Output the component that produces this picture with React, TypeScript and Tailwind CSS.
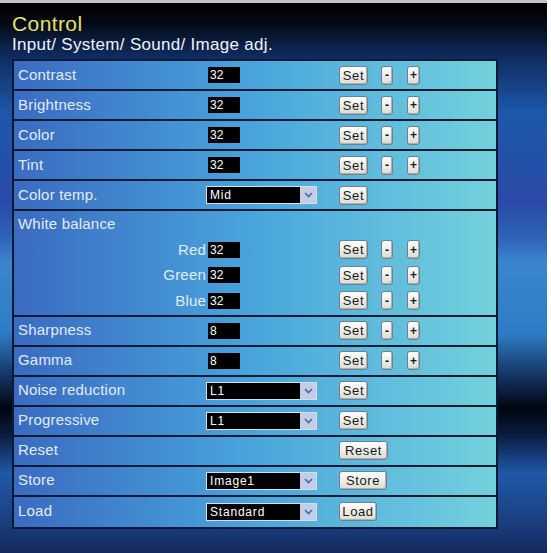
import React from "react";

type Row =
  | { label: string; kind: "num"; value: string }
  | { label: string; kind: "select"; value: string; action: string }
  | { label: string; kind: "button"; action: string }
  | { label: string; kind: "balance" };

const rows: Row[] = [
  { label: "Contrast", kind: "num", value: "32" },
  { label: "Brightness", kind: "num", value: "32" },
  { label: "Color", kind: "num", value: "32" },
  { label: "Tint", kind: "num", value: "32" },
  { label: "Color temp.", kind: "select", value: "Mid", action: "Set" },
  { label: "White balance", kind: "balance" },
  { label: "Sharpness", kind: "num", value: "8" },
  { label: "Gamma", kind: "num", value: "8" },
  { label: "Noise reduction", kind: "select", value: "L1", action: "Set" },
  { label: "Progressive", kind: "select", value: "L1", action: "Set" },
  { label: "Reset", kind: "button", action: "Reset" },
  { label: "Store", kind: "select", value: "Image1", action: "Store" },
  { label: "Load", kind: "select", value: "Standard", action: "Load" },
];

const font = { fontFamily: '"Liberation Sans", Arial, sans-serif' };

function Btn({ children, w, bold }: { children: React.ReactNode; w: string; bold?: boolean }) {
  return (
    <button
      className={`${w} ${bold ? "font-bold text-[12px]" : "text-[13px] tracking-[0.6px]"} flex h-[19px] items-center justify-center rounded-[3px] border border-[#6f7f8f] bg-gradient-to-b from-[#ffffff] to-[#dcdcd6] leading-none text-[#1a1a1a] shadow-[inset_-1px_-1px_0_#b0b0a8]`}
    >
      {children}
    </button>
  );
}

function NumBox({ value }: { value: string }) {
  return (
    <div className="flex h-[16px] w-[32px] items-center bg-black pl-[2px] text-[12px] leading-none text-white">
      {value}
    </div>
  );
}

function SelectBox({ value }: { value: string }) {
  return (
    <div className="flex h-[18px] w-[111px] border border-[#d8dde6] bg-black">
      <div className="flex flex-1 items-center pl-[3px] text-[12px] leading-none tracking-[0.8px] text-white">{value}</div>
      <div className="flex w-[16px] items-center justify-center bg-[#c3cde6]">
        <svg width="9" height="6" viewBox="0 0 9 6">
          <path d="M1 1l3.5 3.5L8 1" fill="none" stroke="#4a68a6" strokeWidth="1.6" />
        </svg>
      </div>
    </div>
  );
}

function Adjust() {
  return (
    <div className="flex items-center">
      <Btn w="w-[29px]">Set</Btn>
      <div className="ml-[13px]">
        <Btn w="w-[12px]" bold>
          -
        </Btn>
      </div>
      <div className="ml-[14px]">
        <Btn w="w-[13px]" bold>
          +
        </Btn>
      </div>
    </div>
  );
}

function TableRow({ row, last }: { row: Row; last: boolean }) {
  const border = last ? "" : "border-b-2 border-[#0b1a33]";
  const bg = "bg-gradient-to-r from-[#3a6bc1] via-[#4aa5dc] to-[#73d1dc]";
  const labelCls = "text-[15px] tracking-[0.2px] text-[#e3ebf8]";

  if (row.kind === "balance") {
    return (
      <div className={`${border} ${bg} pb-[1px]`}>
        <div className={`flex h-[26px] items-center pl-[4px] ${labelCls}`}>{row.label}</div>
        {["Red", "Green", "Blue"].map((c) => (
          <div key={c} className="flex h-[25.5px] items-center">
            <div className={`w-[194px] pr-[2px] text-right ${labelCls}`}>{c}</div>
            <div className="w-[131px]">
              <NumBox value="32" />
            </div>
            <Adjust />
          </div>
        ))}
      </div>
    );
  }

  return (
    <div className={`flex h-[30px] items-center ${border} ${bg}`}>
      <div className={`w-[194px] pl-[4px] ${labelCls}`}>{row.label}</div>
      <div className="w-[131px]">
        {row.kind === "num" && <NumBox value={row.value} />}
        {row.kind === "select" && (
          <div className="-ml-[2px]">
            <SelectBox value={row.value} />
          </div>
        )}
      </div>
      {row.kind === "num" && <Adjust />}
      {row.kind === "select" && (
        <Btn w={row.action === "Set" ? "w-[29px]" : row.action === "Store" ? "w-[48px]" : "w-[38px]"}>{row.action}</Btn>
      )}
      {row.kind === "button" && <Btn w="w-[49px]">{row.action}</Btn>}
    </div>
  );
}

export default function App() {
  return (
    <div className="h-[553px] w-[551px] bg-white" style={font}>
      <div className="h-[3px] w-[547px] bg-[#c4c4c4]" />
      <div className="h-[550px] w-[547px] bg-[linear-gradient(to_bottom,#000000_0px,#040914_20px,#0f2d62_55px,#1d58aa_110px,#2a4aa8_200px,#2f63b8_235px,#3a86cc_260px,#2f7cc6_330px,#13305e_375px,#000610_405px,#0a1a3c_430px,#1f58a8_470px,#1b4488_510px,#15275a_553px)] px-[12px] pt-[10px]">
        <div className="text-[21px] leading-[22px] tracking-[0.4px] text-[#e6e06c]">Control</div>
        <div className="text-[17px] leading-[20px] tracking-[0.3px] text-[#eef3fb]">Input/ System/ Sound/ Image adj.</div>
        <div className="mt-[4px] w-[486px] border-2 border-[#0b1a33]">
          {rows.map((r, i) => (
            <TableRow key={r.label} row={r} last={i === rows.length - 1} />
          ))}
        </div>
      </div>
    </div>
  );
}
